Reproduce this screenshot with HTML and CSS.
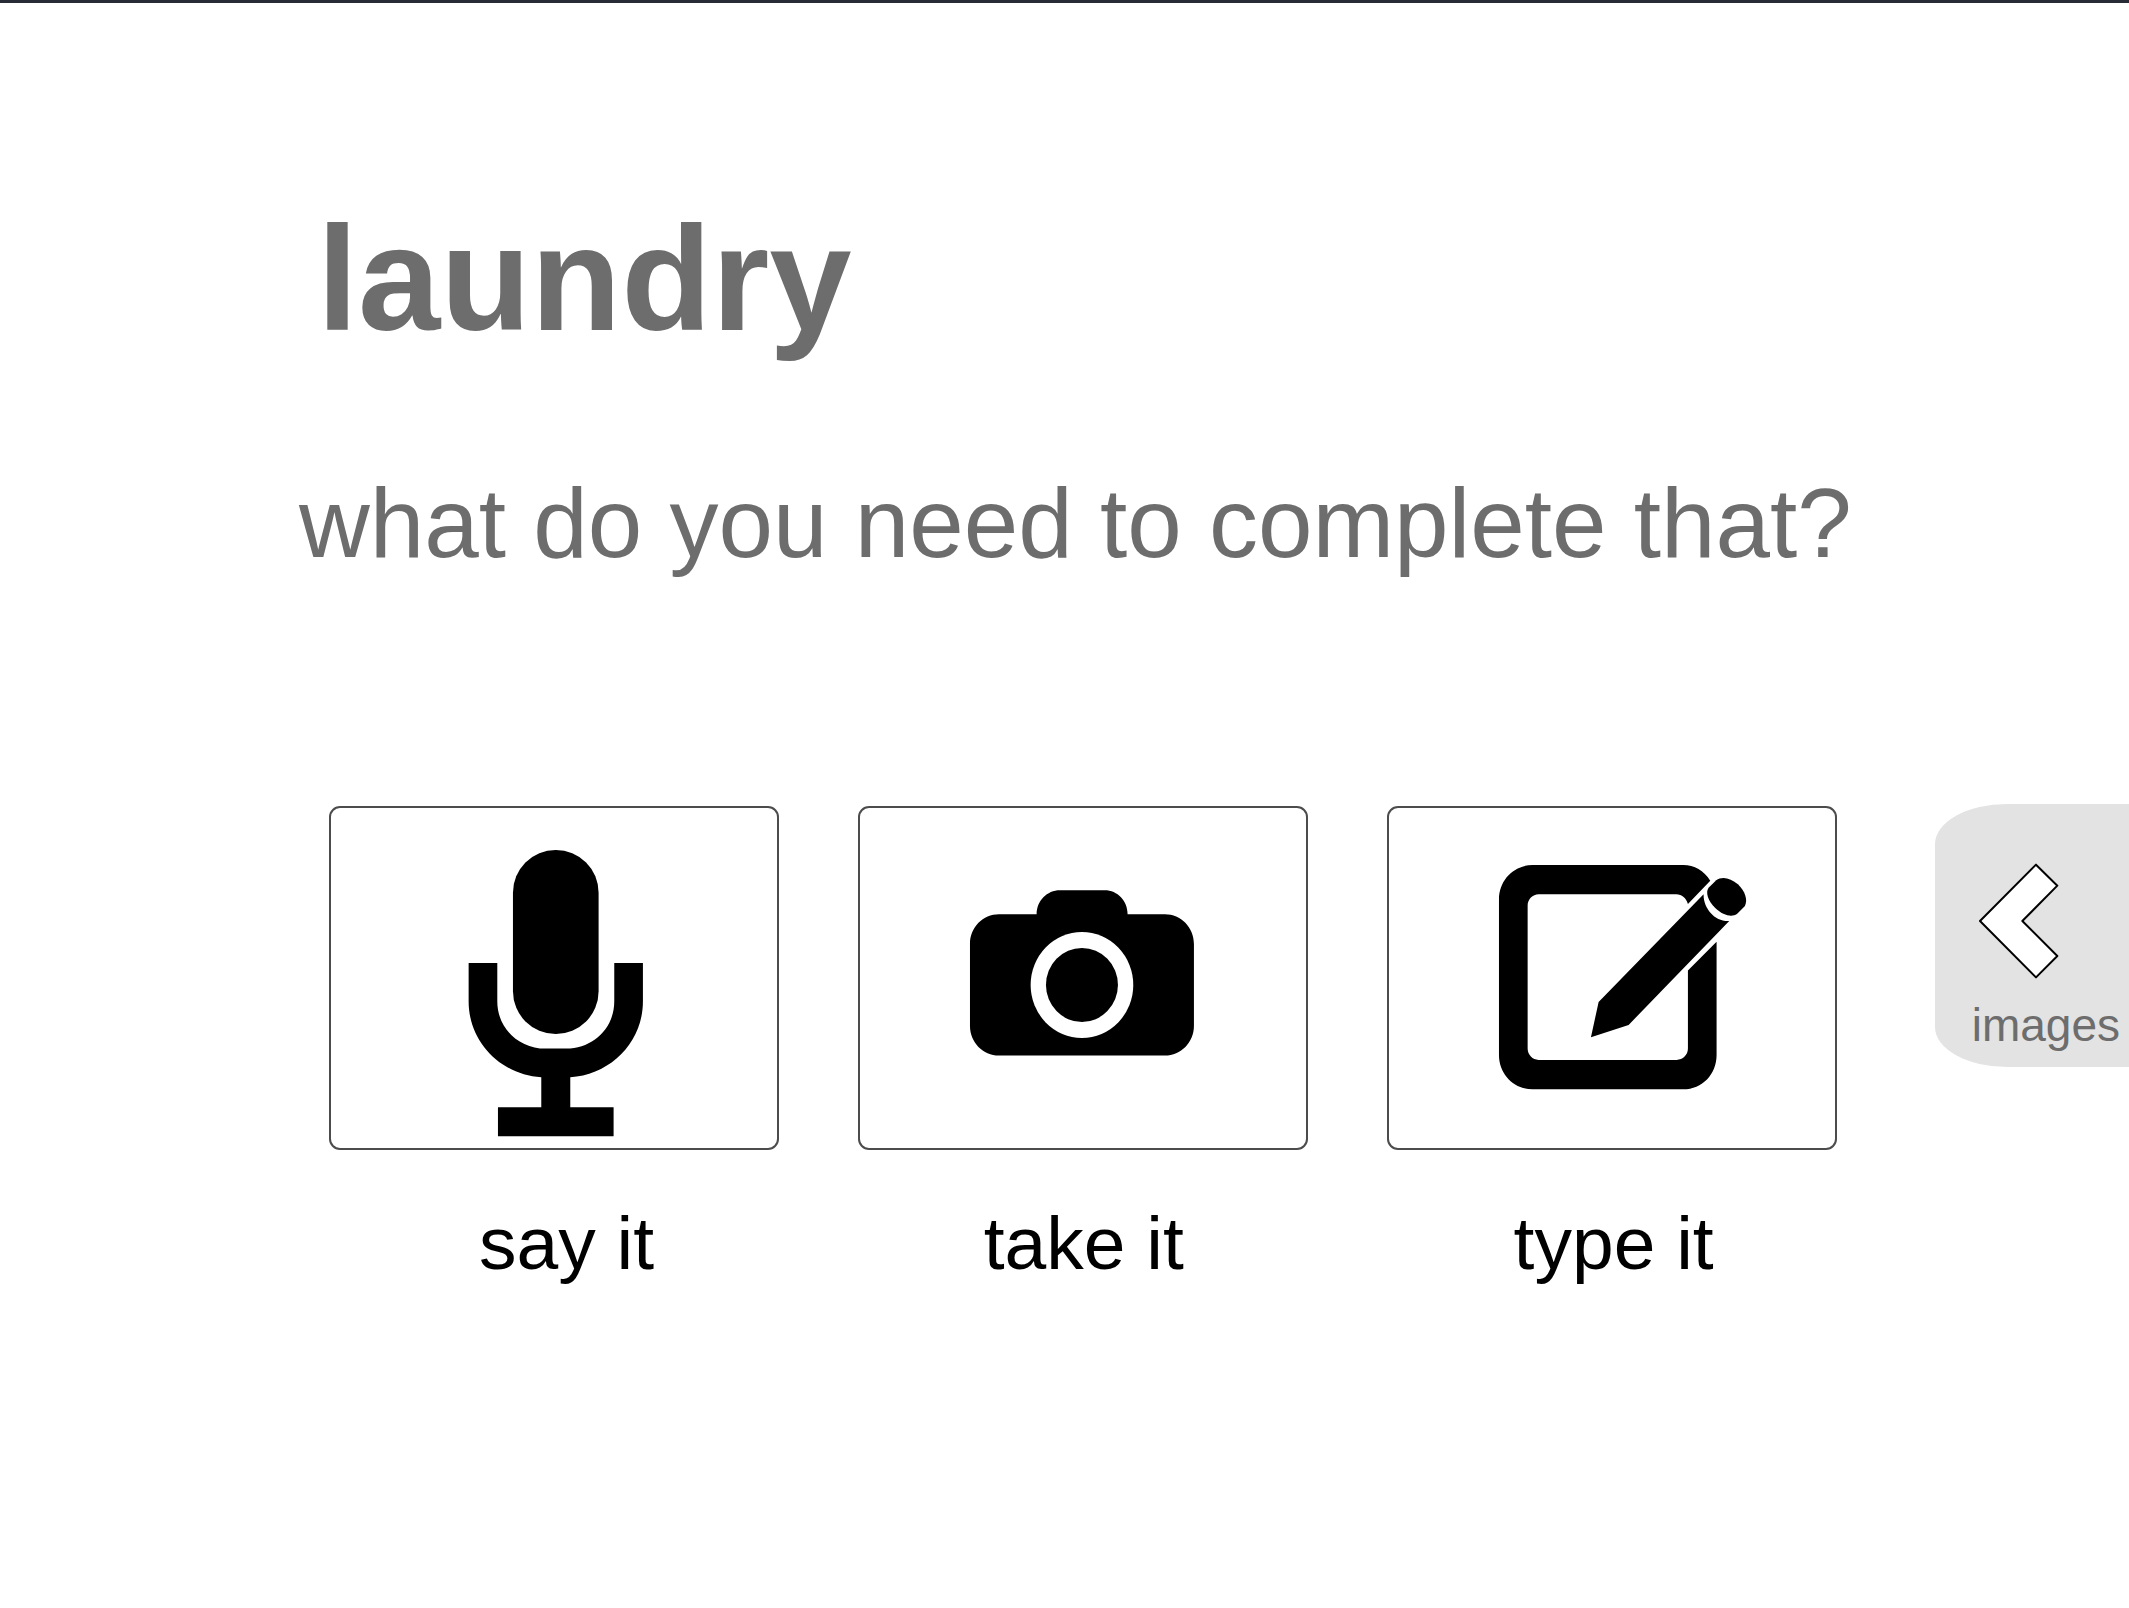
FILE: index.html
```html
<!DOCTYPE html>
<html lang="en">
<head>
  <meta charset="utf-8">
  <meta name="viewport" content="width=device-width, initial-scale=1">
  <title>laundry</title>
  <link rel="stylesheet" href="styles.css">
</head>
<body class="page">
  <main>
    <header class="intro">
      <h1 class="task">laundry</h1>
      <p class="question">what do you need to complete that?</p>
    </header>

    <div class="stage">
      <section class="choices">
        <div class="cards">
          <button class="card" id="say" type="button">
            <svg class="card-icon" viewBox="34 39 1338 1020" aria-hidden="true">
              <rect x="580" y="165" width="257" height="552" rx="128"/>
              <path d="M447 504H533V620C533 700 598 761 678 761H740C820 761 884 700 884 620V504H970V620C970 742 872 840 752 847V937H882V1024H535V937H665V847C545 840 447 742 447 620Z"/>
            </svg>
          </button>
          <button class="card" id="take" type="button">
            <svg class="card-icon" viewBox="30 39 1338 1020" aria-hidden="true">
              <path d="M447 358H560C560 318 591 286 630 286H764C803 286 833 318 833 358H945C993 358 1032 397 1032 447V693C1032 742 993 782 945 782H447C399 782 360 742 360 693V447C360 397 399 358 447 358Z"/>
              <ellipse class="lens-ring" cx="696" cy="570" rx="154" ry="159"/>
              <ellipse cx="696" cy="570" rx="108" ry="111"/>
            </svg>
          </button>
          <button class="card" id="type" type="button">
            <svg class="card-icon" viewBox="27 39 1338 1020" aria-hidden="true">
              <path d="M458 210H910C943 210 972 227 991 257L924 327C919 310 906 298 889 298H476C458 298 443 313 443 332V761C443 780 458 795 476 795H890C909 795 924 780 924 761V527L1010 440V780C1010 838 967 883 910 883H458C402 883 357 838 357 780V313C357 255 402 210 458 210Z"/>
              <path d="M971 298C970 340 1006 381 1048 378L746 690L633 727L656 621Z"/>
              <path d="M1009 256C1025 243 1052 248 1074 268C1096 289 1104 315 1095 333L1071 357C1055 368 1029 361 1006 339C984 317 976 292 986 278Z"/>
            </svg>
          </button>
        </div>
        <div class="captions">
          <label for="say">say it</label>
          <label for="take">take it</label>
          <label for="type">type it</label>
        </div>
      </section>

      <button class="drawer" type="button">
        <svg class="drawer-arrow" viewBox="189 216 270 354" aria-hidden="true">
          <path d="M213 393L381 224L445 287L340 393L445 498L381 562Z"/>
        </svg>
        <span>images</span>
      </button>
    </div>
  </main>
</body>
</html>
```
FILE: styles.css
```css
* {
  box-sizing: border-box;
}

.page {
  margin: 0;
  min-height: 100vh;
  border-top: 3px solid #262b36;
  background: #fff;
  color: #000;
  font-family: "Liberation Sans", Arial, Helvetica, sans-serif;
}

.intro {
  padding: 202px 0 0 299px;
  color: #6d6d6d;
}

.task {
  margin: 0;
  padding-left: 18px;
  font-size: 148px;
  line-height: 148px;
}

.question {
  margin: 121px 0 0;
  font-size: 98px;
  line-height: 98px;
}

.stage {
  display: flex;
  align-items: flex-start;
  gap: 98px;
  margin-top: 232px;
  padding-left: 329px;
}

.choices {
  flex: 1;
  padding-top: 2px;
}

.cards {
  display: grid;
  grid-template-columns: repeat(3, 1fr);
  gap: 79px;
}

.card {
  padding: 0;
  border: 2px solid #4c4c4c;
  border-radius: 11px;
  background: #fff;
}

.card-icon {
  display: block;
  width: 100%;
}

.lens-ring {
  fill: #fff;
}

.captions {
  display: flex;
  justify-content: space-between;
  margin-top: 46px;
  padding: 0 123px 0 150px;
  font-size: 75px;
  line-height: 95px;
}

.drawer {
  display: flex;
  flex-direction: column;
  align-items: flex-start;
  gap: 22px;
  padding: 58px 9px 19px 37px;
  border: 0;
  border-radius: 72px 0 0 72px / 40px 0 0 40px;
  background: #e3e3e3;
  color: #6d6d6d;
  font-family: inherit;
  font-size: 46px;
  line-height: 46px;
}

.drawer-arrow {
  display: block;
  width: 90px;
  height: 118px;
  fill: #fff;
  stroke: #000;
  stroke-width: 6;
  stroke-linejoin: round;
}
```
